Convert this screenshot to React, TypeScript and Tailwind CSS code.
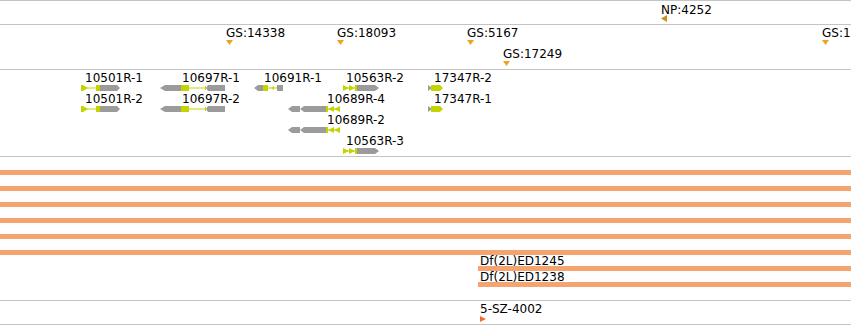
import React from 'react'

// --- Colours ---

const EXON = '#c3d500'
const UTR = '#9b9b9b'
const BAR = '#f5a46f'

// --- Data ---

const NP_MARKS = [{ text: 'NP:4252', x: 661 }]

const GS_MARKS = [
  { text: 'GS:14338', x: 226, row: 0 },
  { text: 'GS:18093', x: 337, row: 0 },
  { text: 'GS:5167', x: 467, row: 0 },
  { text: 'GS:17249', x: 503, row: 1 },
  { text: 'GS:16017', x: 822, row: 0 },
]

const GENE_LABELS = [
  { text: '10501R-1', x: 85, row: 0 },
  { text: '10697R-1', x: 182, row: 0 },
  { text: '10691R-1', x: 264, row: 0 },
  { text: '10563R-2', x: 346, row: 0 },
  { text: '17347R-2', x: 434, row: 0 },
  { text: '10501R-2', x: 85, row: 1 },
  { text: '10697R-2', x: 182, row: 1 },
  { text: '10689R-4', x: 327, row: 1 },
  { text: '17347R-1', x: 434, row: 1 },
  { text: '10689R-2', x: 327, row: 2 },
  { text: '10563R-3', x: 346, row: 3 },
]

const ROW_STEP = 21
const GENE_TOP = 15

// --- Gene glyphs ---

function G10501({ r }: { r: number }) {
  return (
    <g>
      <rect x={81} y={r} width={2} height={6} fill={EXON} />
      <polygon points={`83,${r} 88,${r + 3} 83,${r + 6}`} fill={EXON} />
      <rect x={83} y={r + 2.5} width={14} height={1} fill={EXON} />
      <rect x={96} y={r} width={4} height={6} fill={EXON} />
      <rect x={100} y={r} width={17} height={6} fill={UTR} />
      <polygon points={`117,${r} 120,${r + 3} 117,${r + 6}`} fill={UTR} />
    </g>
  )
}

function G10697({ r }: { r: number }) {
  return (
    <g>
      <polygon points={`160,${r + 3} 165,${r} 165,${r + 6}`} fill={UTR} />
      <rect x={165} y={r} width={16} height={6} fill={UTR} />
      <rect x={181} y={r} width={8} height={6} fill={EXON} />
      <rect x={189} y={r + 2.5} width={17} height={1} fill={EXON} />
      <rect x={205} y={r + 1} width={1} height={4} fill={EXON} />
      <polygon points={`206,${r + 3} 208,${r} 225,${r} 225,${r + 6} 208,${r + 6}`} fill={UTR} />
    </g>
  )
}

function G10691({ r }: { r: number }) {
  return (
    <g>
      <polygon points={`254,${r + 3} 258,${r} 258,${r + 6}`} fill={UTR} />
      <rect x={258} y={r} width={5} height={6} fill={UTR} />
      <rect x={263} y={r} width={5} height={6} fill={EXON} />
      <rect x={268} y={r + 2.5} width={9} height={1} fill={EXON} />
      <polygon points={`271,${r + 3} 274,${r + 1} 274,${r + 5}`} fill={EXON} />
      <rect x={277} y={r} width={6} height={6} fill={UTR} />
    </g>
  )
}

function G10563({ r }: { r: number }) {
  return (
    <g>
      <rect x={343} y={r + 2.5} width={14} height={1} fill={EXON} />
      <polygon points={`343,${r} 349,${r + 3} 343,${r + 6}`} fill={EXON} />
      <polygon points={`349,${r} 355,${r + 3} 349,${r + 6}`} fill={EXON} />
      <rect x={355} y={r} width={2} height={6} fill={EXON} />
      <rect x={357} y={r} width={18} height={6} fill={UTR} />
      <polygon points={`375,${r} 379,${r + 3} 375,${r + 6}`} fill={UTR} />
    </g>
  )
}

function G10689({ r }: { r: number }) {
  return (
    <g>
      <polygon points={`288,${r + 3} 292,${r} 292,${r + 6}`} fill={UTR} />
      <rect x={292} y={r} width={8} height={6} fill={UTR} />
      <polygon points={`300,${r + 3} 304,${r} 326,${r} 326,${r + 6} 304,${r + 6}`} fill={UTR} />
      <rect x={326} y={r + 2.5} width={14} height={1} fill={EXON} />
      <rect x={326} y={r} width={2} height={6} fill={EXON} />
      <polygon points={`334,${r} 328,${r + 3} 334,${r + 6}`} fill={EXON} />
      <polygon points={`340,${r} 334,${r + 3} 340,${r + 6}`} fill={EXON} />
    </g>
  )
}

function G17347({ r }: { r: number }) {
  return (
    <g>
      <polygon points={`428,${r} 432,${r + 3} 428,${r + 6}`} fill={UTR} />
      <rect x={431} y={r} width={9} height={6} fill={EXON} />
      <polygon points={`440,${r} 443,${r + 3} 440,${r + 6}`} fill={EXON} />
    </g>
  )
}

// --- Markers ---

function DownMark({ x, y, color }: { x: number; y: number; color: string }) {
  return (
    <svg className="absolute" style={{ left: x, top: y }} width="7" height="6" aria-hidden="true">
      <polygon points="0,0 7,0 3.5,5" fill={color} />
    </svg>
  )
}

function Label({ text, x, y }: { text: string; x: number; y: number }) {
  return (
    <span className="absolute whitespace-nowrap leading-none" style={{ left: x, top: y }}>
      {text}
    </span>
  )
}

// --- Main ---

export default function App() {
  return (
    <div className="h-[325px] w-[851px] overflow-hidden bg-white font-['DejaVu_Sans',sans-serif] text-[12px] text-black">
      <div className="flex flex-col border-t border-[#c4c4c4]">
        {/* NP track */}
        <div className="relative h-[24px] border-b border-[#c4c4c4]">
          {NP_MARKS.map((m) => (
            <React.Fragment key={m.text}>
              <Label text={m.text} x={m.x} y={3} />
              <svg className="absolute" style={{ left: m.x, top: 14 }} width="6" height="7" aria-hidden="true">
                <polygon points="6,0 0,3.5 6,7" fill="#c8921c" />
              </svg>
            </React.Fragment>
          ))}
        </div>

        {/* GS track */}
        <div className="relative h-[45px] border-b border-[#c4c4c4]">
          {GS_MARKS.map((m) => (
            <React.Fragment key={m.text}>
              <Label text={m.text} x={m.x} y={2 + m.row * 21} />
              <DownMark x={m.x} y={15 + m.row * 21} color="#f0a21e" />
            </React.Fragment>
          ))}
        </div>

        {/* Gene models */}
        <div className="relative h-[87px] border-b border-[#c4c4c4]">
          {GENE_LABELS.map((l) => (
            <Label key={l.text} text={l.text} x={l.x} y={2 + l.row * ROW_STEP} />
          ))}
          <svg className="absolute left-0 top-0" width="851" height="86" aria-hidden="true">
            <G10501 r={GENE_TOP} />
            <G10501 r={GENE_TOP + ROW_STEP} />
            <G10697 r={GENE_TOP} />
            <G10697 r={GENE_TOP + ROW_STEP} />
            <G10691 r={GENE_TOP} />
            <G10563 r={GENE_TOP} />
            <G10563 r={GENE_TOP + ROW_STEP * 3} />
            <G10689 r={GENE_TOP + ROW_STEP} />
            <G10689 r={GENE_TOP + ROW_STEP * 2} />
            <G17347 r={GENE_TOP} />
            <G17347 r={GENE_TOP + ROW_STEP} />
          </svg>
        </div>

        {/* Deficiency bars */}
        <div className="flex h-[144px] flex-col border-b border-[#c4c4c4] pt-[13px]">
          <div className="flex flex-col gap-[11px]">
            {[0, 1, 2, 3, 4, 5].map((i) => (
              <div key={i} className="h-[5px] w-full" style={{ backgroundColor: BAR }} />
            ))}
          </div>
          <div className="ml-[478px] flex flex-col">
            <span className="ml-[2px] h-[11px] whitespace-nowrap leading-none">Df(2L)ED1245</span>
            <div className="h-[5px] w-full" style={{ backgroundColor: BAR }} />
            <span className="ml-[2px] h-[11px] whitespace-nowrap leading-none">Df(2L)ED1238</span>
            <div className="h-[5px] w-full" style={{ backgroundColor: BAR }} />
          </div>
        </div>

        {/* Insertions */}
        <div className="relative h-[24px] border-b border-[#c4c4c4]">
          <Label text="5-SZ-4002" x={480} y={2} />
          <svg className="absolute" style={{ left: 480, top: 15 }} width="6" height="6" aria-hidden="true">
            <polygon points="0,0 6,3 0,6" fill="#f26a3c" />
          </svg>
        </div>
      </div>
    </div>
  )
}
